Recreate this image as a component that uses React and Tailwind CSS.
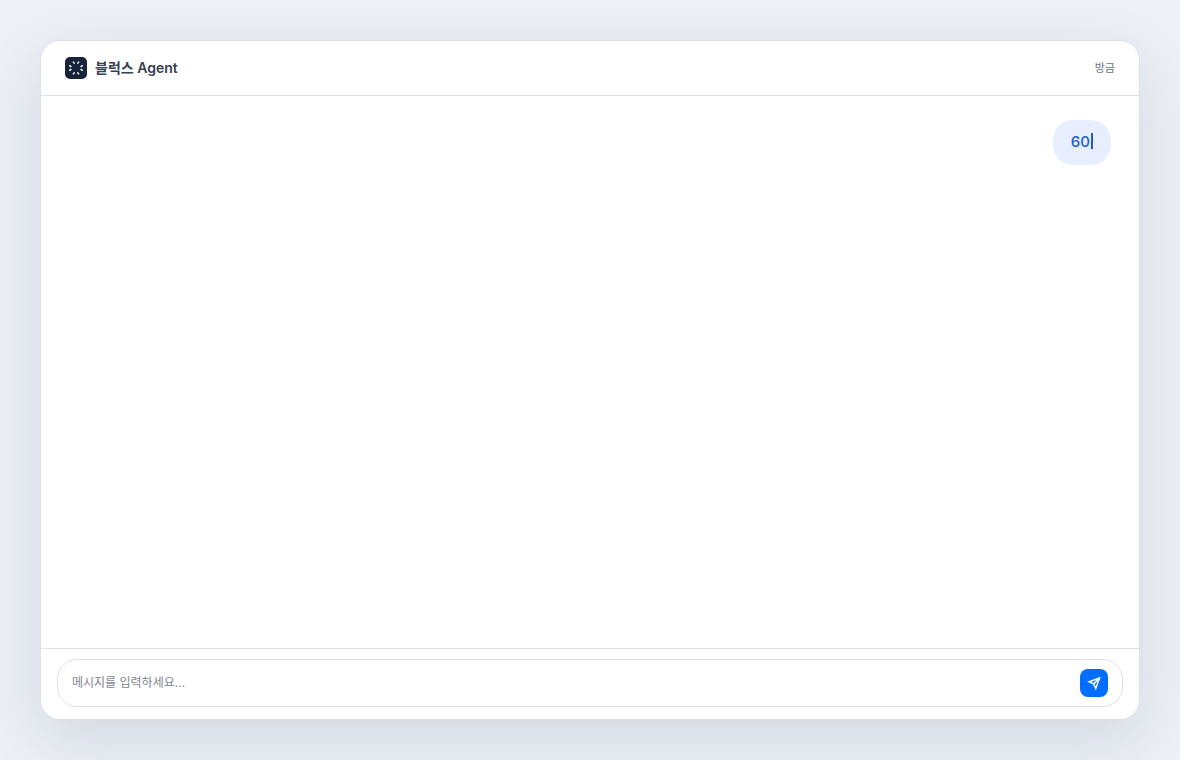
import { useState } from "react";

const messages = [{ id: 1, from: "user", text: "60", typing: true }];

function AgentLogo() {
  return (
    <span className="flex size-[22px] shrink-0 items-center justify-center rounded-[5px] bg-[#16233b]">
      <svg
        viewBox="0 0 22 22"
        className="size-[22px]"
        fill="none"
        stroke="#fff"
        strokeWidth="1.5"
        aria-hidden="true"
      >
        <path d="M8 4.6 9.6 6.6M14 4.6 12.4 6.6M8 17.4 9.6 15.4M14 17.4 12.4 15.4" />
        <path d="M4.3 8.3 6.4 9.8M4.3 13.7 6.4 12.2M17.7 8.3 15.6 9.8M17.7 13.7 15.6 12.2" />
      </svg>
    </span>
  );
}

function SendIcon() {
  return (
    <svg
      viewBox="0 0 24 24"
      className="size-[14px]"
      fill="none"
      stroke="currentColor"
      strokeWidth="2.5"
      strokeLinejoin="miter"
      aria-hidden="true"
    >
      <path d="M21.5 3.5 3.5 10 11.5 13.5 15 21.5Z" />
      <path d="M21.5 3.5 11.5 13.5" />
    </svg>
  );
}

export default function App() {
  const [draft, setDraft] = useState("");

  return (
    <div className="flex min-h-screen bg-[#edf0f5] p-10 font-['Inter','Noto_Sans_CJK_KR',sans-serif]">
      <main className="flex flex-1 flex-col overflow-hidden rounded-[20px] border border-[#dfe1ea] bg-white shadow-[0_20px_60px_rgba(40,60,110,0.13)]">
        <header className="flex h-[55px] items-center gap-2 border-b border-[#dfe1ea] px-6">
          <AgentLogo />
          <h1 className="text-[14px] leading-5 font-semibold text-[#374151]">
            블럭스 Agent
          </h1>
          <time className="ml-auto text-[11px] leading-4 text-[#6b7280]">방금</time>
        </header>

        <section className="flex flex-1 flex-col items-end px-7 py-6">
          {messages.map((m) => (
            <p
              key={m.id}
              className="rounded-[20px] bg-[#e6eeff] px-[18px] pt-[10px] pb-3 text-[15px] leading-[23px] font-medium text-[#2459d3]"
            >
              {m.text}
              {m.typing && (
                <span className="ml-px inline-block h-4 w-0.5 align-[-2px] bg-[#2459d3]" />
              )}
            </p>
          ))}
        </section>

        <footer className="border-t border-[#dfe1ea] px-4 pt-[10px] pb-3">
          <form
            className="flex h-12 items-center rounded-[20px] border border-[#dfe1ea] px-[14px]"
            onSubmit={(e) => {
              e.preventDefault();
              setDraft("");
            }}
          >
            <input
              type="text"
              aria-label="메시지"
              value={draft}
              onChange={(e) => setDraft(e.target.value)}
              placeholder="메시지를 입력하세요..."
              className="min-w-0 flex-1 text-[12px] leading-5 text-[#374151] outline-none placeholder:text-[#7f8590]"
            />
            <button
              type="submit"
              aria-label="보내기"
              className="flex size-7 items-center justify-center rounded-lg bg-[#006fff] text-white"
            >
              <SendIcon />
            </button>
          </form>
        </footer>
      </main>
    </div>
  );
}
